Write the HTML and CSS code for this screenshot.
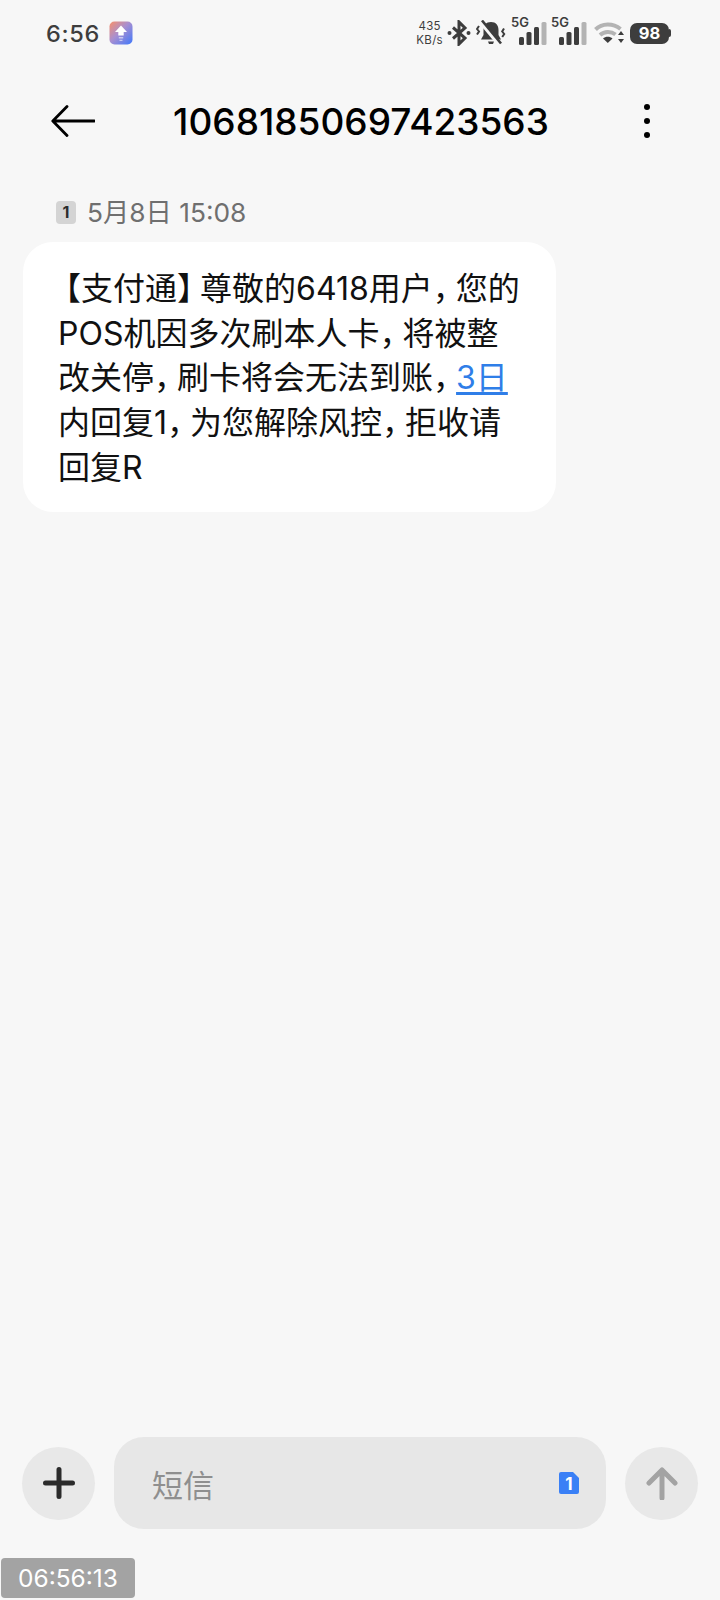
FILE: index.html
```html
<!DOCTYPE html>
<html lang="zh-CN">
<head>
<meta charset="utf-8">
<title>短信</title>
<link rel="stylesheet" href="styles.css">
</head>
<body>
<div class="app">
  <div class="status">
    <div class="status-left">
      <span class="clock">6:56</span>
      <svg class="app-badge" width="24" height="24" viewBox="0 0 24 24"><defs><linearGradient id="g" x1="0" y1="0" x2="1" y2="1"><stop offset="0" stop-color="#f8906a"/><stop offset=".45" stop-color="#a98fd0"/><stop offset="1" stop-color="#3f78fb"/></linearGradient></defs><rect width="23" height="23" x=".5" y=".5" rx="5" fill="url(#g)"/><path d="M12 4.500 18 11h-3.300v3.500h-5.400V11H6z" fill="#fff"/><path d="M9.800 16h4.400v1.500H9.800zM10.500 18.800h3v1.300h-3z" fill="#fff" opacity=".55"/></svg>
    </div>
    <div class="status-right">
      <div class="speed"><span>435</span><span>KB/s</span></div>
      <svg class="ico-bt" width="24" height="26" viewBox="0 0 24 26"><path d="M6 7.500 18 18 12 24V2l6 6L6 18.500" fill="none" stroke="#3d3d3d" stroke-width="3"/><circle cx="2.500" cy="13" r="2" fill="#3d3d3d"/><circle cx="21.500" cy="13" r="2" fill="#3d3d3d"/></svg>
      <svg class="ico-bell" width="30" height="26" viewBox="0 0 30 26"><path d="M15 2c-5 0-7.500 3.500-7.500 8v5l-2.500 4.500h20L22.500 15v-5c0-4.500-2.500-8-7.500-8z" fill="#3d3d3d"/><path d="M12 21.500h6l-1 2.500h-4z" fill="#3d3d3d"/><path d="M4 1.500 23 24.500" stroke="#f7f7f7" stroke-width="3.600"/><path d="M6 .5 25 23.500" stroke="#3d3d3d" stroke-width="2.600"/><path d="M3 6 1 9l2 2.500L1 14.500M28 8.500l-1.800 3 2 2.500-2 3" fill="none" stroke="#3d3d3d" stroke-width="2"/></svg>
      <div class="signal">
        <span class="sig-label">5G</span>
        <svg width="28" height="24" viewBox="0 0 28 24"><rect x="0" y="15" width="5" height="8" rx="1.500" fill="#3d3d3d"/><rect x="7.500" y="10" width="5" height="13" rx="1.500" fill="#3d3d3d"/><rect x="15" y="5" width="5" height="18" rx="1.500" fill="#3d3d3d"/><rect x="22.500" y="0" width="5" height="23" rx="1.500" fill="#b3b3b3"/></svg>
      </div>
      <div class="signal">
        <span class="sig-label">5G</span>
        <svg width="28" height="24" viewBox="0 0 28 24"><rect x="0" y="15" width="5" height="8" rx="1.500" fill="#3d3d3d"/><rect x="7.500" y="10" width="5" height="13" rx="1.500" fill="#3d3d3d"/><rect x="15" y="5" width="5" height="18" rx="1.500" fill="#3d3d3d"/><rect x="22.500" y="0" width="5" height="23" rx="1.500" fill="#b3b3b3"/></svg>
      </div>
      <svg class="ico-wifi" width="30" height="22" viewBox="0 0 30 22"><path d="M1.500 7.500C8 1 19 1 26.500 7" fill="none" stroke="#b3b3b3" stroke-width="4"/><path d="M6 13c4.500-4 11-4 15.500-.5" fill="none" stroke="#b3b3b3" stroke-width="4"/><path d="M9 16.500c2.500-2.500 7-2.500 9.500 0L13.800 21z" fill="#3d3d3d"/><path d="M27 9l3 4h-6zM27 21l3-4h-6z" fill="#3d3d3d"/></svg>
      <div class="battery"><span class="batt-body">98</span><span class="batt-tip"></span></div>
    </div>
  </div>

  <header class="bar">
    <svg class="back" width="44" height="32" viewBox="0 0 44 32"><path d="M16 1.500 1.800 16 16 30.500M2 16h41.500" fill="none" stroke="#000" stroke-width="2.800" stroke-linecap="round" stroke-linejoin="round"/></svg>
    <h1 class="title">10681850697423563</h1>
    <svg class="more" width="8" height="36" viewBox="0 0 8 36"><circle cx="4" cy="4" r="3" fill="#000"/><circle cx="4" cy="18" r="3" fill="#000"/><circle cx="4" cy="32" r="3" fill="#000"/></svg>
  </header>

  <main class="thread">
    <div class="stamp">
      <span class="sim-grey">1</span>
      <span class="when">5月8日 15:08</span>
    </div>
    <div class="bubble"><span class="open">【</span>支付通<span class="gap">】</span>尊敬的6418用户<span class="gap">，</span>您的<br>POS机因多次刷本人卡<span class="gap">，</span>将被整<br>改关停<span class="gap">，</span>刷卡将会无法到账<span class="gap">，</span><a class="link">3日</a><br>内回复1<span class="gap">，</span>为您解除风控<span class="gap">，</span>拒收请<br>回复R</div>
  </main>

  <footer class="composer">
    <button class="round"><svg width="32" height="32" viewBox="0 0 32 32"><path d="M16 2.500v27M2.500 16h27" stroke="#2b2b2b" stroke-width="5" stroke-linecap="round"/></svg></button>
    <div class="input">
      <span class="hint">短信</span>
      <svg class="sim-blue" width="22" height="24" viewBox="0 0 22 24"><path d="M3 1h12l6 6v14a2 2 0 0 1-2 2H3a2 2 0 0 1-2-2V3a2 2 0 0 1 2-2z" fill="#3a80f6"/><text x="11" y="18.500" text-anchor="middle" class="sim-num">1</text></svg>
    </div>
    <button class="round"><svg width="32" height="34" viewBox="0 0 32 34"><path d="M16 4v28M3 17 16 4l13 13" fill="none" stroke="#a3a3a3" stroke-width="5" stroke-linecap="round" stroke-linejoin="round"/></svg></button>
  </footer>
  <div class="rec-time">06:56:13</div>
</div>
</body>
</html>
```
FILE: styles.css
```css
* { box-sizing: border-box; }
html, body { margin: 0; padding: 0; }
body { background: #f7f7f7; font-family: Inter, "Noto Sans CJK SC", sans-serif; }
.app { width: 720px; height: 1600px; display: flex; flex-direction: column; position: relative; overflow: hidden; }

.status { height: 66px; padding: 0 49px 0 46px; display: flex; justify-content: space-between; align-items: center; }
.status-left { display: flex; align-items: center; gap: 9px; }
.clock { font-size: 23.500px; font-weight: 500; color: #3d3d3d; letter-spacing: .7px; }
.app-badge { display: block; }
.status-right { display: flex; align-items: center; }
.speed { display: flex; flex-direction: column; align-items: center; font-size: 11.500px; line-height: 14px; color: #3d3d3d; margin-right: 4px; letter-spacing: .3px; }
.ico-bt, .ico-bell, .ico-wifi { display: block; }
.ico-bell { margin: 0 5px; }
.signal { position: relative; width: 36px; height: 26px; margin-right: 4px; display: flex; justify-content: flex-end; align-items: flex-end; }
.signal svg { display: block; }
.sig-label { position: absolute; left: 0; top: -5px; font-size: 13px; font-weight: 600; color: #3d3d3d; line-height: 14px; }
.ico-wifi { margin: 0 6px 0 3px; }
.battery { display: flex; align-items: center; }
.batt-body { width: 39px; height: 21px; border-radius: 7px; background: #3d3d3d; color: #fff; font-size: 16.500px; font-weight: 700; line-height: 21px; text-align: center; }
.batt-tip { width: 2px; height: 8px; background: #3d3d3d; border-radius: 0 2px 2px 0; }

.bar { height: 110px; padding: 0 69px 0 51px; display: flex; align-items: center; }
.back, .more { display: block; flex: none; }
.title { flex: 1; margin: 0; padding-right: 16px; text-align: center; font-size: 37px; font-weight: 500; color: #000; }

.thread { flex: 1; padding: 16px 0 0 23px; }
.stamp { display: flex; align-items: center; gap: 11px; margin: 0 0 10px 33px; height: 40px; }
.sim-grey { width: 20px; height: 23px; background: #d4d4d4; border-radius: 4px; font-size: 16px; font-weight: 700; text-align: center; line-height: 23px; color: #2c2c2c; }
.when { font-size: 26.300px; color: #6f6f6f; padding-bottom: 4px; }
.bubble { width: 533px; height: 270px; background: #fff; border-radius: 30px; padding: 25px 0 0 35px; font-size: 32px; line-height: 44.700px; color: #111; font-feature-settings: "halt"; white-space: nowrap; }
.open { margin-left: 7px; }
.gap { letter-spacing: 7px; }
.link { color: #2f7ee8; text-decoration: underline; text-underline-offset: 3px; }

.composer { height: 92px; padding: 0 22px; display: flex; align-items: center; gap: 19px; margin-bottom: 71px; }
.round { width: 73px; height: 73px; flex: none; border: 0; border-radius: 50%; background: #e8e8e8; padding: 0; display: flex; align-items: center; justify-content: center; }
.round svg { display: block; }
.input { flex: 1; height: 92px; border-radius: 30px; background: #e7e7e7; display: flex; align-items: center; justify-content: space-between; padding: 0 26px 0 38px; }
.hint { font-size: 31px; color: #8f8f8f; }
.sim-blue { display: block; }
.sim-num { fill: #fff; font-size: 17px; font-weight: 700; font-family: Inter, sans-serif; }

.rec-time { position: absolute; left: 1px; bottom: 2px; width: 134px; height: 40px; border-radius: 4px; background: #a3a3a3; color: #fff; font-size: 24.500px; line-height: 40px; text-align: center; }
```
